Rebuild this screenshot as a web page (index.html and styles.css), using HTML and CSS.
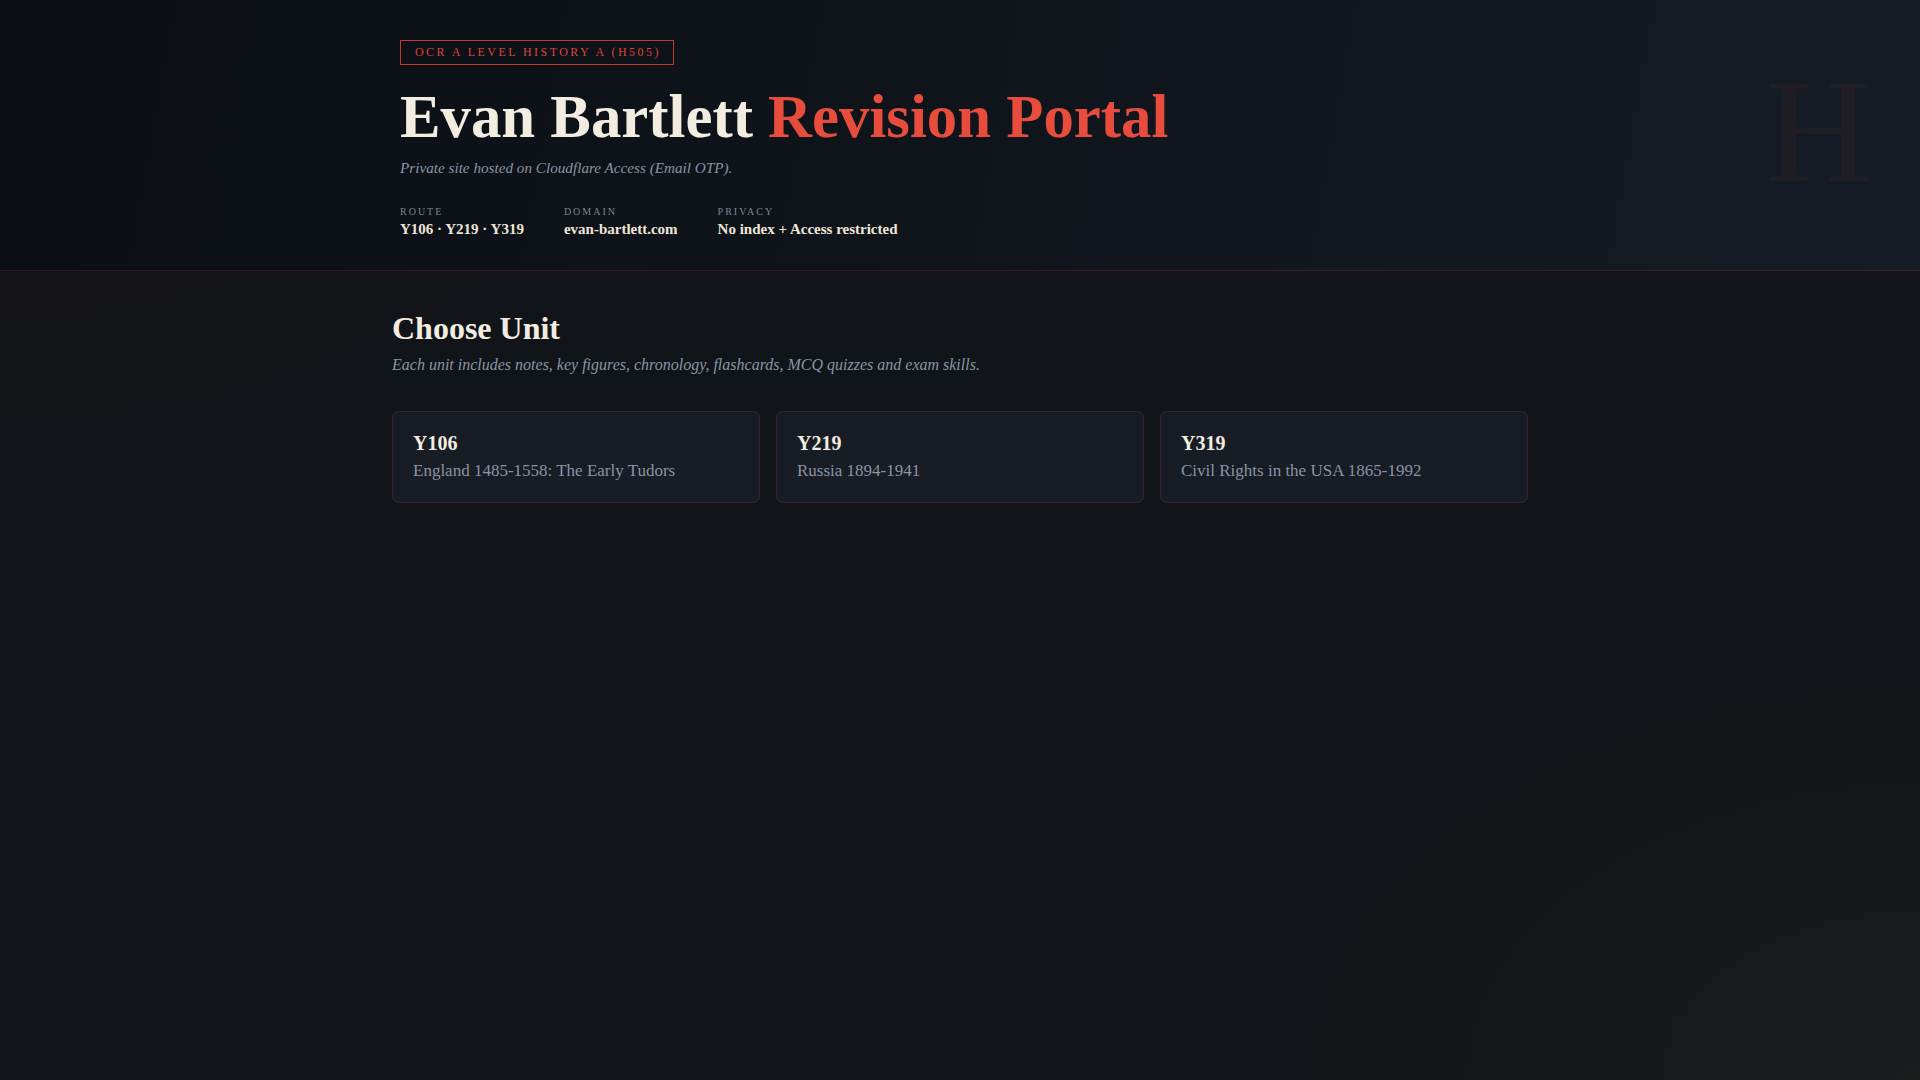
FILE: index.html
```html
<!DOCTYPE html>
<html lang="en">
<head>
<meta charset="utf-8">
<title>Evan Bartlett Revision Portal</title>
<link rel="stylesheet" href="styles.css">
</head>
<body>
<header class="hero">
  <div class="hero-inner">
    <span class="badge">OCR A Level History A (H505)</span>
    <h1 class="title">Evan Bartlett <span class="accent">Revision Portal</span></h1>
    <p class="lead">Private site hosted on Cloudflare Access (Email OTP).</p>
    <div class="meta">
      <div class="meta-item">
        <div class="meta-label">Route</div>
        <div class="meta-value">Y106 · Y219 · Y319</div>
      </div>
      <div class="meta-item">
        <div class="meta-label">Domain</div>
        <div class="meta-value">evan-bartlett.com</div>
      </div>
      <div class="meta-item">
        <div class="meta-label">Privacy</div>
        <div class="meta-value">No index + Access restricted</div>
      </div>
    </div>
  </div>
  <div class="watermark" aria-hidden="true">H</div>
</header>
<main class="main">
  <h2 class="section-title">Choose Unit</h2>
  <p class="section-sub">Each unit includes notes, key figures, chronology, flashcards, MCQ quizzes and exam skills.</p>
  <div class="units">
    <a class="unit" href="#y106">
      <div class="unit-code">Y106</div>
      <div class="unit-name">England 1485-1558: The Early Tudors</div>
    </a>
    <a class="unit" href="#y219">
      <div class="unit-code">Y219</div>
      <div class="unit-name">Russia 1894-1941</div>
    </a>
    <a class="unit" href="#y319">
      <div class="unit-code">Y319</div>
      <div class="unit-name">Civil Rights in the USA 1865-1992</div>
    </a>
  </div>
</main>
</body>
</html>
```
FILE: styles.css
```css
* { box-sizing: border-box; }

html, body {
  margin: 0;
  padding: 0;
  min-height: 100%;
}

body {
  font-family: "Liberation Serif", "Times New Roman", serif;
  color: #f3ece0;
  min-height: 100vh;
  background:
    radial-gradient(ellipse 1000px 650px at 0% 0%, rgba(231, 76, 60, 0.05), transparent 70%),
    radial-gradient(ellipse 1000px 650px at 100% 100%, rgba(210, 175, 110, 0.05), transparent 70%),
    #111418;
}

.hero {
  position: relative;
  overflow: hidden;
  background: linear-gradient(100deg, #0b0f14 0%, #0f141b 45%, #161c25 100%);
  border-bottom: 1px solid rgba(200, 40, 50, 0.22);
}

.hero-inner {
  max-width: 1200px;
  margin: 0 auto;
  padding: 40px 40px 31px;
}

.badge {
  display: inline-block;
  font-size: 12px;
  line-height: 15px;
  letter-spacing: 2.45px;
  text-transform: uppercase;
  color: #d9453a;
  border: 1px solid #c23a2f;
  padding: 4px 12px 4px 14px;
}

.title {
  margin: 18.5px 0 0;
  font-size: 60.8px;
  line-height: 1.1;
  font-weight: 700;
  color: #f3ece0;
}

.accent { color: #e74c3c; }

.lead {
  margin: 6.5px 0 0;
  font-size: 15.2px;
  line-height: 1.5;
  font-style: italic;
  color: #8a94a2;
}

.meta {
  display: flex;
  gap: 40px;
  margin-top: 25px;
}

.meta-label {
  font-size: 10px;
  line-height: 13px;
  letter-spacing: 2px;
  text-transform: uppercase;
  color: #7c8593;
}

.meta-value {
  margin-top: 2px;
  font-size: 15px;
  line-height: 1.3;
  font-weight: 700;
  color: #eee6d8;
}

.watermark {
  position: absolute;
  top: 57px;
  right: 48px;
  font-size: 148px;
  line-height: 1;
  color: rgba(231, 76, 60, 0.055);
}

.main {
  max-width: 1200px;
  margin: 0 auto;
  padding: 38px 32px 40px;
}

.section-title {
  margin: 0;
  font-size: 32px;
  line-height: 1.2;
  font-weight: 700;
  color: #f3ece0;
}

.section-sub {
  margin: 5px 0 0;
  font-size: 16px;
  line-height: 1.5;
  font-style: italic;
  color: #8a94a2;
}

.units {
  display: grid;
  grid-template-columns: repeat(3, 1fr);
  gap: 16px;
  margin-top: 34.5px;
}

.unit {
  display: block;
  text-decoration: none;
  background: #171c25;
  border: 1px solid rgba(200, 40, 50, 0.25);
  border-radius: 7px;
  padding: 18px 20px 18px;
}

.unit-code {
  font-size: 20px;
  line-height: 26px;
  font-weight: 700;
  color: #f3ece0;
}

.unit-name {
  margin-top: 2px;
  font-size: 17px;
  line-height: 1.5;
  color: #8a94a2;
}
```
